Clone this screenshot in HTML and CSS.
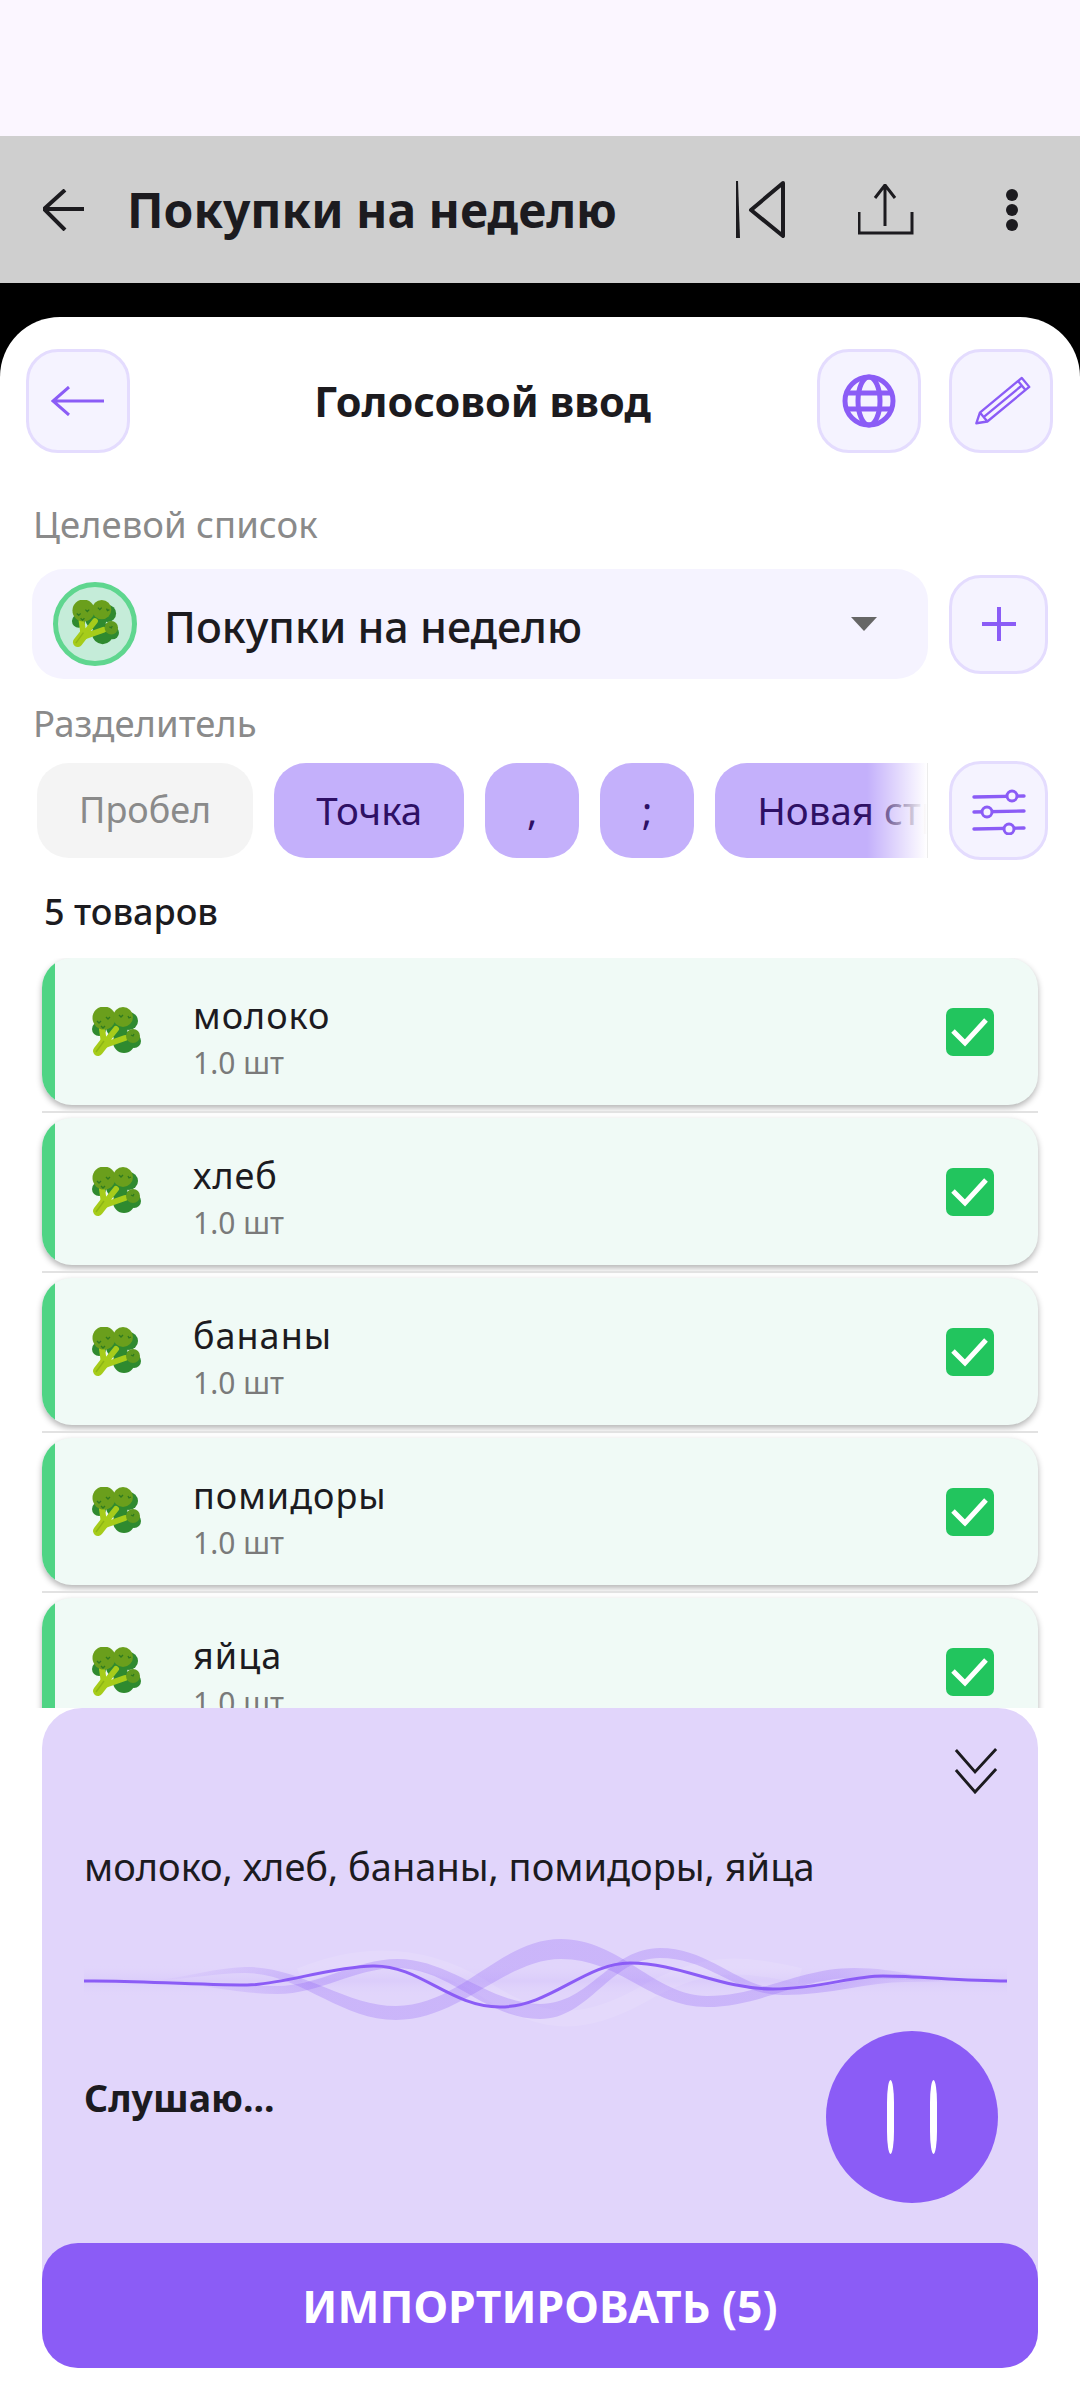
FILE: index.html
```html
<!DOCTYPE html>
<html lang="ru">
<head>
  <meta charset="utf-8">
  <title>Голосовой ввод</title>
  <link rel="stylesheet" href="styles.css">
</head>
<body>
  <svg class="defs" width="0" height="0">
    <symbol id="broccoli" viewBox="0 0 50 50">
      <circle cx="38" cy="14" r="9" fill="#2f8a2f"/>
      <circle cx="8" cy="22" r="7" fill="#2f8a2f"/>
      <circle cx="33" cy="35" r="11" fill="#2f8a2f"/>
      <circle cx="43" cy="34" r="7" fill="#2f8a2f"/>
      <circle cx="26" cy="20" r="11" fill="#2f8a2f"/>
      <path d="M13 36L11 22M13 37L25 22M14 38L34 31" stroke="#a6cc1a" stroke-width="6" stroke-linecap="round" fill="none"/>
      <path d="M7 44L14 35" stroke="#a6cc1a" stroke-width="10" stroke-linecap="round"/>
      <path d="M5 45L13 34" stroke="#8db515" stroke-width="1.4"/>
      <circle cx="13" cy="11" r="11.5" fill="#6a9f1c"/>
      <circle cx="32" cy="10" r="10" fill="#6a9f1c"/>
      <circle cx="42" cy="29" r="7" fill="#5f9a1e"/>
      <path d="M6 14l2 2 2-2M15 10l2 2 2-2M28 8l2 2 2-2M10 19l2 2 2-2M37 9l1 2 2-1M40 28l2 1 1-2" stroke="#2f7a20" stroke-width="1.3" fill="none"/>
    </symbol>
  </svg>

  <div class="status"></div>

  <div class="appbar">
    <svg class="icon-back" width="41" height="42" viewBox="43 189 41 42"><path d="M65 190L44 209L65 230M44 209H84" fill="none" stroke="#1c1b1f" stroke-width="4"/></svg>
    <span class="appbar-title">Покупки на неделю</span>
    <svg class="icon-rewind" width="50" height="60" viewBox="735 180 50 60"><path d="M736 181H738L740 238H736Z" fill="#1c1b1f"/><path d="M783 183L751 210L783 236Z" fill="none" stroke="#1c1b1f" stroke-width="4" stroke-linejoin="round"/></svg>
    <svg class="icon-share" width="56" height="52" viewBox="858 184 56 52"><path d="M875 198L885 185L895 198M885 185V226M859 212V233H912V212" fill="none" stroke="#1c1b1f" stroke-width="3"/></svg>
    <svg class="icon-dots" width="12" height="42" viewBox="0 0 12 42"><circle cx="6" cy="6" r="6" fill="#1c1b1f"/><circle cx="6" cy="21" r="6" fill="#1c1b1f"/><circle cx="6" cy="36" r="6" fill="#1c1b1f"/></svg>
  </div>

  <div class="backdrop">
    <div class="sheet">
      <div class="sheet-head">
        <button class="tool tool-lg">
          <svg width="54" height="30" viewBox="52 386 54 30"><path d="M70 387L54 401L70 415M54 401H105" fill="none" stroke="#8b5cf6" stroke-width="3"/></svg>
        </button>
        <h1 class="sheet-title">Голосовой ввод</h1>
        <button class="tool tool-lg">
          <svg width="54" height="54" viewBox="-27 -27 54 54">
            <g fill="none" stroke="#8b5cf6" stroke-width="5"><circle r="24"/><ellipse rx="11" ry="24"/><path d="M-24 -8H24M-24 8H24"/></g>
          </svg>
        </button>
        <button class="tool tool-lg">
          <svg width="60" height="52" viewBox="970 376 62 52"><path d="M975.5 425L979.2 414L1022.5 378.2L1030.2 387.4L986.9 423.2ZM983 418.6L1022.5 386M979.2 414L986.9 423.2M1018.6 381.4L1026.3 390.6" fill="none" stroke="#8b5cf6" stroke-width="2.4" stroke-linejoin="round"/></svg>
        </button>
      </div>

      <div class="field-label">Целевой список</div>
      <div class="target-row">
        <div class="target">
          <div class="avatar"><svg width="48" height="48"><use href="#broccoli"/></svg></div>
          <span class="target-name">Покупки на неделю</span>
          <svg class="caret" width="26" height="14" viewBox="0 0 26 14"><path d="M0 0H26L13 14Z" fill="#666"/></svg>
        </div>
        <button class="tool">
          <svg width="36" height="36" viewBox="0 0 36 36"><path d="M18 1V35M1 18H35" stroke="#8b5cf6" stroke-width="4"/></svg>
        </button>
      </div>

      <div class="field-label field-label-second">Разделитель</div>
      <div class="chips-row">
        <div class="chips">
          <span class="chip">Пробел</span>
          <span class="chip chip-on">Точка</span>
          <span class="chip chip-on chip-sym">,</span>
          <span class="chip chip-on chip-sym">;</span>
          <span class="chip chip-on">Новая строка</span>
          <div class="chips-fade"></div>
        </div>
        <button class="tool">
          <svg width="54" height="48" viewBox="971 784 54 48" fill="none" stroke="#8b5cf6">
            <path d="M973 794L1023 793M973 809L1023 808M973 826L1023 825" stroke-width="3.4" stroke-linecap="round"/>
            <circle cx="1011" cy="793" r="5" fill="#f5f3ff" stroke-width="3"/>
            <circle cx="986" cy="809" r="5" fill="#f5f3ff" stroke-width="3"/>
            <circle cx="1008" cy="826" r="5" fill="#f5f3ff" stroke-width="3"/>
          </svg>
        </button>
      </div>

      <div class="count">5 товаров</div>

      <div class="items">
        <div class="item-row">
          <div class="item">
            <div class="item-strip"></div>
            <svg class="item-icon" width="50" height="50"><use href="#broccoli"/></svg>
            <div class="item-text"><div class="item-name">молоко</div><div class="item-qty">1.0 шт</div></div>
            <div class="check"><svg width="48" height="48" viewBox="0 0 48 48"><path d="M7 23L19 35L40 12" fill="none" stroke="#fff" stroke-width="5"/></svg></div>
          </div>
        </div>
        <div class="item-row">
          <div class="item">
            <div class="item-strip"></div>
            <svg class="item-icon" width="50" height="50"><use href="#broccoli"/></svg>
            <div class="item-text"><div class="item-name">хлеб</div><div class="item-qty">1.0 шт</div></div>
            <div class="check"><svg width="48" height="48" viewBox="0 0 48 48"><path d="M7 23L19 35L40 12" fill="none" stroke="#fff" stroke-width="5"/></svg></div>
          </div>
        </div>
        <div class="item-row">
          <div class="item">
            <div class="item-strip"></div>
            <svg class="item-icon" width="50" height="50"><use href="#broccoli"/></svg>
            <div class="item-text"><div class="item-name">бананы</div><div class="item-qty">1.0 шт</div></div>
            <div class="check"><svg width="48" height="48" viewBox="0 0 48 48"><path d="M7 23L19 35L40 12" fill="none" stroke="#fff" stroke-width="5"/></svg></div>
          </div>
        </div>
        <div class="item-row">
          <div class="item">
            <div class="item-strip"></div>
            <svg class="item-icon" width="50" height="50"><use href="#broccoli"/></svg>
            <div class="item-text"><div class="item-name">помидоры</div><div class="item-qty">1.0 шт</div></div>
            <div class="check"><svg width="48" height="48" viewBox="0 0 48 48"><path d="M7 23L19 35L40 12" fill="none" stroke="#fff" stroke-width="5"/></svg></div>
          </div>
        </div>
        <div class="item-row">
          <div class="item">
            <div class="item-strip"></div>
            <svg class="item-icon" width="50" height="50"><use href="#broccoli"/></svg>
            <div class="item-text"><div class="item-name">яйца</div><div class="item-qty">1.0 шт</div></div>
            <div class="check"><svg width="48" height="48" viewBox="0 0 48 48"><path d="M7 23L19 35L40 12" fill="none" stroke="#fff" stroke-width="5"/></svg></div>
          </div>
        </div>
      </div>

      <div class="voice">
        <div class="voice-top">
          <svg width="44" height="46" viewBox="953 1746 46 48"><path d="M955 1748L975 1771L997 1747M955 1769L975 1792L997 1768" fill="none" stroke="#1c1b1f" stroke-width="3"/></svg>
        </div>
        <div class="transcript">молоко, хлеб, бананы, помидоры, яйца</div>
        <svg class="wave" width="996" height="100" viewBox="42 1930 996 100">
          <defs>
            <linearGradient id="fade" gradientUnits="userSpaceOnUse" x1="150" y1="0" x2="960" y2="0">
              <stop offset="0" stop-color="#8b5cf6" stop-opacity="0"/>
              <stop offset=".2" stop-color="#8b5cf6" stop-opacity=".26"/>
              <stop offset=".85" stop-color="#8b5cf6" stop-opacity=".26"/>
              <stop offset="1" stop-color="#8b5cf6" stop-opacity="0"/>
            </linearGradient>
            <linearGradient id="glow" x1="0" y1="0" x2="0" y2="1">
              <stop offset="0" stop-color="#fff" stop-opacity="0"/>
              <stop offset=".5" stop-color="#8b5cf6" stop-opacity=".07"/>
              <stop offset="1" stop-color="#fff" stop-opacity="0"/>
            </linearGradient>
          </defs>
          <rect x="84" y="1960" width="923" height="40" fill="url(#glow)"/>
          <path d="M300 1975C360 1950 420 1950 480 1985C540 2025 580 2028 640 1995C700 1960 740 1960 800 1975" fill="none" stroke="#fff" stroke-opacity=".1" stroke-width="16"/>
          <!-- band that dips at 393 and peaks at 561 -->
          <path d="M160 1979C190 1975 215 1967 245 1966C300 1965 345 2005 396 2005C460 2005 500 1938 561 1938C620 1938 655 1995 707 1995C760 1995 800 1967 854 1967C900 1967 925 1979 950 1980C925 1981 900 1977 854 1977C800 1977 760 2006 707 2006C650 2006 620 1958 561 1958C505 1958 460 2019 396 2019C340 2019 300 1972 245 1972C215 1972 190 1978 160 1979Z" fill="url(#fade)"/>
          <!-- band that peaks at 397 and 660 -->
          <path d="M160 1979C190 1979 235 1985 277 1985C320 1985 355 1958 397 1958C450 1958 490 2003 540 2003C590 2003 610 1947 660 1947C710 1947 740 1988 783 1988C830 1988 870 1973 905 1973C925 1973 945 1979 960 1980C945 1981 925 1981 905 1981C870 1981 830 1994 783 1994C735 1994 710 1957 660 1957C610 1957 590 2018 540 2018C485 2018 450 1967 397 1967C355 1967 320 1993 277 1993C235 1993 190 1981 160 1979Z" fill="url(#fade)"/>
          <path d="M84 1980C130 1979 190 1984 247 1984C280 1984 330 1966 373 1965C420 1964 450 2006 500 2006C550 2006 585 1962 630 1962C680 1962 720 1988 773 1988C820 1988 850 1975 883 1975C920 1975 960 1980 1007 1980" fill="none" stroke="#8b5cf6" stroke-width="3"/>
        </svg>
        <div class="voice-bottom">
          <span class="voice-status">Слушаю...</span>
          <button class="pause"><i></i><i></i></button>
        </div>
        <button class="import">ИМПОРТИРОВАТЬ (5)</button>
      </div>
    </div>
  </div>
</body>
</html>
```

FILE: styles.css
```css
* {
  box-sizing: border-box;
}
html, body {
  margin: 0;
  padding: 0;
}
body {
  width: 1080px;
  height: 2400px;
  overflow: hidden;
  background: #fff;
  color: #1c1b1f;
  font-family: "Noto Sans", "DejaVu Sans", sans-serif;
}
button {
  font-family: inherit;
  border: none;
  padding: 0;
}
.defs {
  position: absolute;
}
.status {
  height: 136px;
  background: #fbf6ff;
}

/* dimmed screen behind the sheet */
.appbar {
  height: 147px;
  background: #cfcfcf;
  display: flex;
  align-items: center;
  padding-left: 43px;
}
.appbar-title {
  font-size: 48px;
  font-weight: 700;
  margin-left: 43px;
  width: 649px;
  white-space: nowrap;
}
.icon-back {
  flex-shrink: 0;
}
.icon-rewind {
  margin-left: -41px;
}
.icon-share {
  margin-left: 73px;
}
.icon-dots {
  margin-left: 92px;
}
.backdrop {
  background: #000;
  padding-top: 34px;
  height: 2117px;
}

.sheet {
  background: #fff;
  height: 2083px;
  border-radius: 60px 60px 0 0;
  padding-top: 32px;
}
.sheet-head {
  display: flex;
  align-items: center;
  padding: 0 27px 0 26px;
}
.sheet-title {
  flex: 1;
  margin: 0;
  padding-left: 18px;
  text-align: center;
  font-size: 41.5px;
  font-weight: 700;
}
.sheet-head .tool + .tool {
  margin-left: 28px;
}
.tool {
  width: 99px;
  height: 99px;
  flex-shrink: 0;
  background: #f5f3ff;
  border: 3px solid #e4dcfe;
  border-radius: 32px;
  display: flex;
  align-items: center;
  justify-content: center;
}
.tool-lg {
  width: 104px;
  height: 104px;
}

.field-label {
  margin: 49px 0 0 33px;
  font-size: 36.5px;
  line-height: 44px;
  color: #8a8a8a;
}
.field-label-second {
  margin-top: 22px;
}
.target-row {
  display: flex;
  align-items: center;
  gap: 21px;
  margin: 23px 0 0 32px;
  height: 110px;
}
.target {
  width: 896px;
  height: 110px;
  background: #f5f3ff;
  border-radius: 32px;
  display: flex;
  align-items: center;
  padding: 0 51px 0 21px;
}
.avatar {
  width: 84px;
  height: 84px;
  border-radius: 50%;
  background: #c5ecd9;
  border: 5px solid #5fd68f;
  display: flex;
  align-items: center;
  justify-content: center;
  flex-shrink: 0;
}
.target-name {
  flex: 1;
  margin-left: 27px;
  padding-top: 5px;
  font-size: 43px;
  font-weight: 500;
}
.chips-row {
  display: flex;
  align-items: center;
  gap: 21px;
  margin: 16px 0 0 37px;
  height: 99px;
}
.chips {
  position: relative;
  width: 891px;
  height: 95px;
  overflow: hidden;
  display: flex;
  gap: 21px;
  border-right: 1px solid #ececec;
}
.chip {
  flex-shrink: 0;
  height: 95px;
  padding: 0 42px;
  border-radius: 32px;
  background: #f4f4f4;
  color: #8a8a8a;
  font-size: 36px;
  line-height: 94px;
  white-space: nowrap;
}
.chip-on {
  background: #c4b0fb;
  color: #2e1065;
  font-size: 38.5px;
}
.chip-sym {
  width: 94px;
  padding: 0;
  text-align: center;
}
.chips-fade {
  position: absolute;
  top: 0;
  right: 0;
  width: 60px;
  height: 95px;
  background: linear-gradient(to right, rgba(255, 255, 255, 0), #fff);
}
.count {
  margin: 30px 0 0 44px;
  font-size: 36px;
  line-height: 44px;
  font-weight: 500;
}

.items {
  height: 750px;
  margin-top: 24px;
  padding: 0 42px;
  overflow: hidden;
}
.item-row {
  height: 160px;
}
.item-row::after {
  content: "";
  display: block;
  height: 2px;
  margin-top: 6px;
  background: #e2e2e2;
}
.item {
  height: 147px;
  display: flex;
  align-items: center;
  overflow: hidden;
  background: #f0faf6;
  border-radius: 30px;
  box-shadow: 0 3px 6px rgba(0, 0, 0, 0.3);
}
.item-strip {
  width: 13px;
  height: 147px;
  background: #4fd484;
  flex-shrink: 0;
}
.item-icon {
  margin-left: 36px;
  flex-shrink: 0;
}
.item-text {
  flex: 1;
  align-self: flex-start;
  margin: 35px 0 0 52px;
}
.item-name {
  font-size: 36px;
  line-height: 46px;
  letter-spacing: 1px;
}
.item-qty {
  margin-top: 4px;
  font-size: 30px;
  line-height: 40px;
  color: #7a7a7a;
}
.check {
  width: 48px;
  height: 48px;
  margin-right: 44px;
  border-radius: 7px;
  background: #22c55e;
  display: flex;
  align-items: center;
  justify-content: center;
}

.voice {
  width: 996px;
  height: 660px;
  margin-left: 42px;
  background: #e1d5fb;
  border-radius: 40px;
}
.voice-top {
  display: flex;
  justify-content: flex-end;
  padding: 40px 40px 0 0;
  height: 86px;
}
.transcript {
  margin: 50px 0 0 42px;
  font-size: 38px;
  line-height: 44px;
}
.wave {
  display: block;
  margin-top: 43px;
}
.voice-bottom {
  display: flex;
  justify-content: space-between;
  height: 173px;
  padding: 0 40px 0 42px;
}
.voice-status {
  margin-top: 45px;
  font-size: 37.5px;
  line-height: 44px;
  font-weight: 700;
}
.pause {
  width: 172px;
  height: 172px;
  border-radius: 50%;
  background: #8b5cf6;
  display: flex;
  align-items: center;
  justify-content: center;
  gap: 36px;
}
.pause i {
  width: 7px;
  height: 74px;
  border-radius: 4px / 26px;
  background: #fff;
}
.import {
  display: block;
  width: 996px;
  height: 125px;
  margin-top: 39px;
  background: #8b5cf6;
  color: #fff;
  border-radius: 36px;
  font-size: 44.5px;
  font-weight: 700;
}
```
